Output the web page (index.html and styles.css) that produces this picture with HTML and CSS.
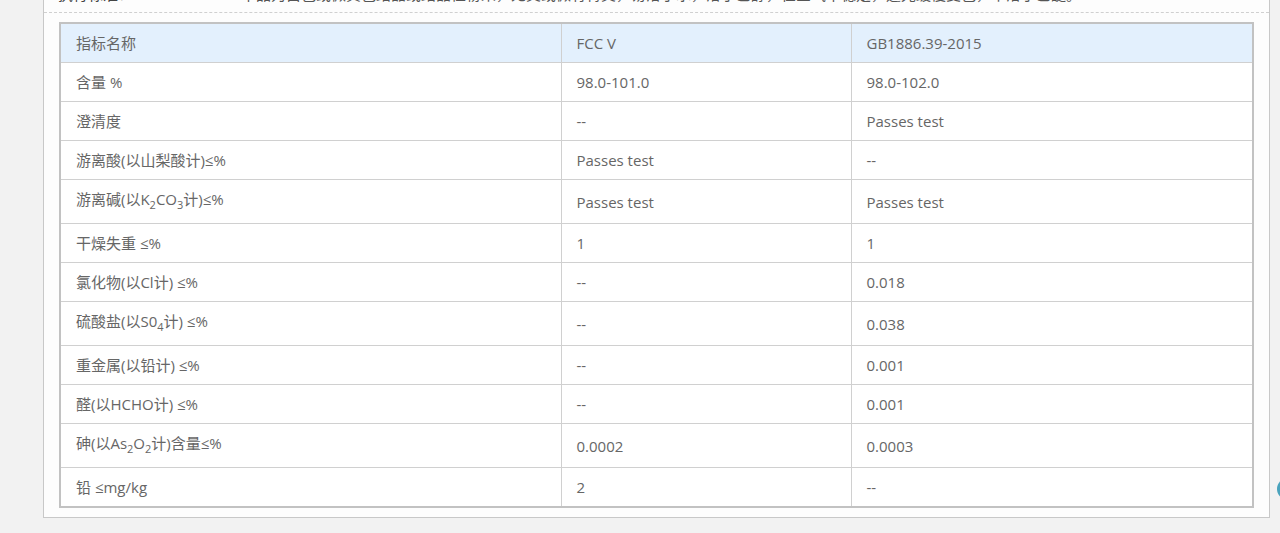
FILE: index.html
```html
<!DOCTYPE html>
<html lang="zh-CN">
<head>
<meta charset="utf-8">
<title>质量标准</title>
<link rel="stylesheet" href="styles.css">
</head>
<body>
<div class="panel">
  <div class="info-row">
    <span class="info-label">执行标准：</span>
    <span class="info-text">本品为白色或微黄色结晶或结晶性粉末，无臭或微有特臭，易溶于水，溶于乙醇，在空气中稳定，遇光缓慢变色，不溶于乙醚。</span>
  </div>
  <table class="spec">
    <colgroup>
      <col class="c1"><col class="c2"><col class="c3">
    </colgroup>
    <thead>
      <tr><th>指标名称</th><th>FCC V</th><th>GB1886.39-2015</th></tr>
    </thead>
    <tbody>
      <tr><td>含量 %</td><td>98.0-101.0</td><td>98.0-102.0</td></tr>
      <tr><td>澄清度</td><td>--</td><td>Passes test</td></tr>
      <tr><td>游离酸(以山梨酸计)≤%</td><td>Passes test</td><td>--</td></tr>
      <tr><td>游离碱(以K<sub>2</sub>CO<sub>3</sub>计)≤%</td><td>Passes test</td><td>Passes test</td></tr>
      <tr><td>干燥失重 ≤%</td><td>1</td><td>1</td></tr>
      <tr><td>氯化物(以Cl计) ≤%</td><td>--</td><td>0.018</td></tr>
      <tr><td>硫酸盐(以S0<sub>4</sub>计) ≤%</td><td>--</td><td>0.038</td></tr>
      <tr><td>重金属(以铅计) ≤%</td><td>--</td><td>0.001</td></tr>
      <tr><td>醛(以HCHO计) ≤%</td><td>--</td><td>0.001</td></tr>
      <tr><td>砷(以As<sub>2</sub>O<sub>2</sub>计)含量≤%</td><td>0.0002</td><td>0.0003</td></tr>
      <tr><td>铅 ≤mg/kg</td><td>2</td><td>--</td></tr>
    </tbody>
  </table>
</div>
<div class="float-btn"></div>
</body>
</html>
```

FILE: styles.css
```css
html, body {
  margin: 0;
  padding: 0;
}
body {
  background: #f2f2f2;
  font-family: "Open Sans", "Noto Sans CJK SC", sans-serif;
  font-size: 15px;
  color: #666;
  overflow: hidden;
}
.panel {
  margin: -30px 0 0 43px;
  width: 1225px;
  background: #fdfdfd;
  border: 1px solid #c8c8c8;
  padding: 0 0 9px;
}
.info-row {
  display: flex;
  height: 42px;
  align-items: flex-end;
  border-bottom: 1px dashed #d0d0d0;
  padding-left: 14px;
  line-height: 20px;
  color: #444;
  box-sizing: border-box;
  padding-bottom: 8px;
}
.info-label {
  width: 183px;
}
.info-text {
  color: #555;
}
.spec {
  margin: 9px 0 0 15px;
  width: 1195px;
  border-collapse: collapse;
  border: 2px solid #c2c2c2;
  background: #fff;
  table-layout: fixed;
}
.c1 { width: 501px; }
.c2 { width: 290px; }
.c3 { width: auto; }
.spec th,
.spec td {
  border: 1px solid #d0d0d0;
  padding: 9px 15px;
  line-height: 20px;
  text-align: left;
  font-weight: normal;
  color: #666;
}
.spec thead th {
  background: #e3f0fd;
}
.spec sub {
  font-size: 11px;
  line-height: 18px;
}
.float-btn {
  position: fixed;
  left: 1277px;
  top: 478px;
  width: 22px;
  height: 22px;
  border-radius: 50%;
  background: #4aa3bd;
}
```
